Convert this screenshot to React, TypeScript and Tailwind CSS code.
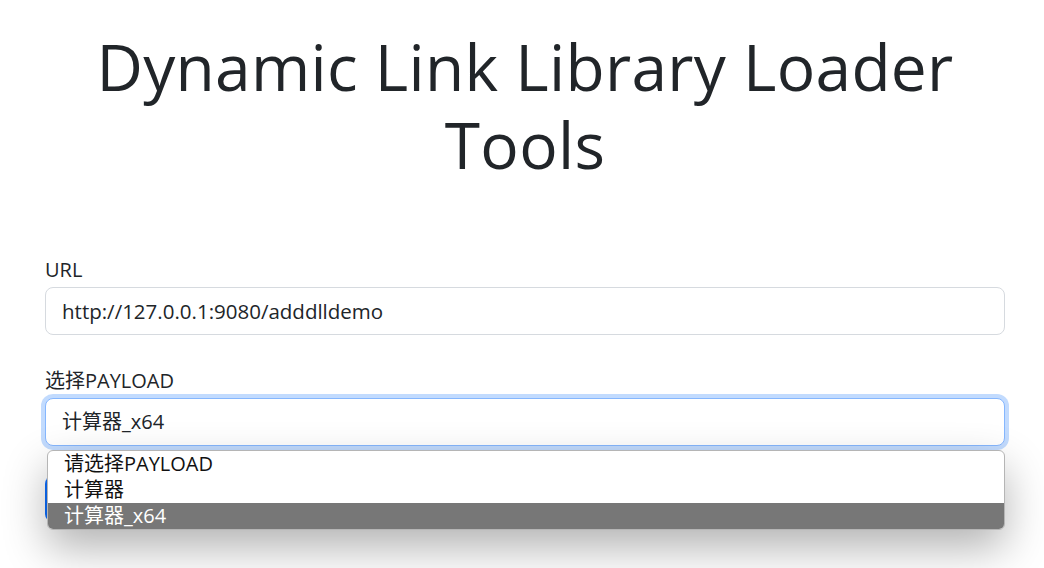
import React from 'react';

const options = ['请选择PAYLOAD', '计算器', '计算器_x64'];

// Native select popup, drawn open over the form
const SelectPopup: React.FC = () => {
  return (
    <div className="absolute top-[52px] left-[2px] right-0 z-10 overflow-hidden rounded-md border border-[#b5b5b5] bg-white shadow-[0_18px_44px_rgba(0,0,0,0.3)]">
      {options.map((o, i) => (
        <div
          key={o}
          className={
            i === options.length - 1
              ? 'h-[26px] pl-4 text-[20px] leading-[26px] bg-[#777777] text-white'
              : 'h-[26px] pl-4 text-[20px] leading-[26px] text-[#111]'
          }
        >
          {o}
        </div>
      ))}
    </div>
  );
};

export default function App() {
  return (
    <div className="min-h-screen bg-white text-[#212529] font-['Open_Sans','Noto_Sans_CJK_SC',sans-serif]">
      <div className="ml-[45px] w-[960px] pt-[28px]">
        <h1 className="text-center text-[64px] leading-[78px] tracking-[0.3px] font-normal">
          Dynamic Link Library Loader Tools
        </h1>

        <div className="mt-[71px]">
          <label className="block text-[20px] leading-[30px] mb-[2px]">URL</label>
          <input
            className="block w-full h-[48px] px-4 text-[20.5px] rounded-lg border border-[#d6dadf] outline-none"
            defaultValue="http://127.0.0.1:9080/adddlldemo"
          />
        </div>

        <div className="mt-[31px]">
          <label className="block text-[20px] leading-[30px] mb-[2px]">选择PAYLOAD</label>
          <div className="relative">
            <div className="h-[48px] px-4 flex items-center text-[20px] rounded-lg border border-[#86b7fe] shadow-[0_0_0_4px_rgba(13,110,253,0.25)] bg-white">
              计算器_x64
            </div>
            <SelectPopup />
          </div>
        </div>

        <button className="mt-[30px] h-[46px] px-4 rounded-lg bg-[#0d6efd] text-white text-[20px]">
          加载
        </button>
      </div>
    </div>
  );
}
